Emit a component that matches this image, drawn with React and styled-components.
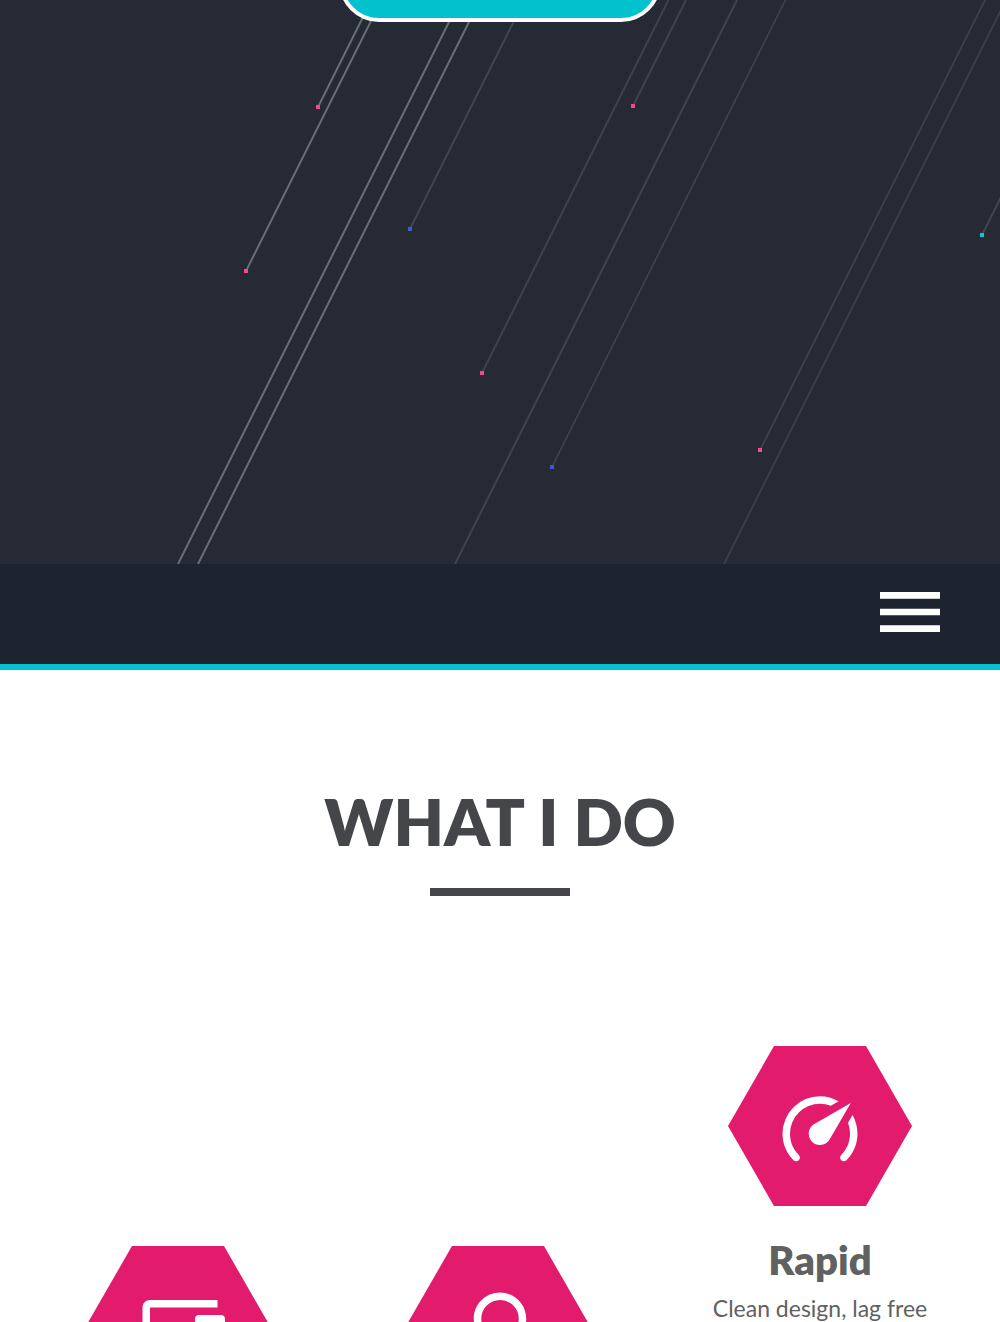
import React from 'react';
import styled, { createGlobalStyle } from 'styled-components';

const GlobalStyle = createGlobalStyle`
  * { box-sizing: border-box; }
  body {
    margin: 0;
    background: #fff;
    font-family: Lato, "Open Sans", sans-serif;
  }
`;

const Page = styled.div`
  height: 100vh;
  overflow: hidden;
`;

const Hero = styled.header`
  position: relative;
  height: 564px;
  overflow: hidden;
  display: flex;
  justify-content: center;
  align-items: flex-start;
  background: #262a35;
`;

const Streaks = styled.svg`
  position: absolute;
  top: 0;
  left: 50%;
  width: 1000px;
  height: 564px;
  transform: translateX(-50%);
`;

const HeroButton = styled.button`
  position: relative;
  width: 322px;
  height: 80px;
  margin-top: -58px;
  border: 4px solid #fff;
  border-radius: 40px;
  background: #04c2cd;
  cursor: pointer;
`;

const NavBar = styled.nav`
  display: flex;
  justify-content: flex-end;
  padding: 8px 50px 12px;
  background: #1d242f;
  border-bottom: 6px solid #04c2cd;
`;

const MenuButton = styled.button`
  display: block;
  width: 80px;
  height: 80px;
  padding: 0;
  border: 0;
  background: none;
  color: #fff;
  cursor: pointer;
`;

const Icon = styled.svg`
  display: block;
  width: ${(p) => p.$size}px;
  height: ${(p) => p.$size}px;
  fill: currentColor;
`;

const Section = styled.main`
  display: flex;
  flex-direction: column;
  align-items: center;
  padding: 112px 20px 0;
`;

const Heading = styled.h1`
  margin: 0;
  font-size: 65px;
  line-height: 78px;
  font-weight: 800;
  color: #444649;
`;

const Rule = styled.div`
  width: 140px;
  height: 8px;
  margin: 28px 0 150px;
  background: #444649;
`;

const Services = styled.div`
  align-self: stretch;
  display: grid;
  grid-template-columns: repeat(3, 1fr);
`;

const Service = styled.article`
  display: flex;
  flex-direction: column;
  align-items: center;
  text-align: center;
  color: #616161;
  transform: ${(p) => (p.$pending ? 'translateY(200px)' : 'none')};
`;

const Hexagon = styled.div`
  display: flex;
  justify-content: center;
  width: 188px;
  height: 160px;
  padding-top: 39px;
  background: #e31b6d;
  color: #fff;
  clip-path: ${(p) =>
    p.$pending
      ? 'polygon(46px 0, 138px 0, 184px 50%, 138px 100%, 46px 100%, 0 50%)'
      : 'polygon(48px 0, 140px 0, 186px 50%, 140px 100%, 48px 100%, 2px 50%)'};
`;

const ServiceTitle = styled.h2`
  margin: 29px 0 0;
  font-size: 40px;
  line-height: 50px;
  font-weight: 800;
`;

const ServiceText = styled.p`
  margin: 9px 0 0;
  font-size: 23px;
  line-height: 28px;
  font-weight: 400;
`;

const paths = {
  menu: 'M3 18h18v-2H3v2zm0-5h18v-2H3v2zm0-7v2h18V6H3z',
  devices:
    'M4 6h18V4H4c-1.1 0-2 .9-2 2v11H0v3h14v-3H4V6zm19 2h-6c-.55 0-1 .45-1 1v10c0 .55.45 1 1 1h6c.55 0 1-.45 1-1V9c0-.55-.45-1-1-1zm-1 9h-4v-7h4v7z',
  bulb:
    'M9 21c0 .55.45 1 1 1h4c.55 0 1-.45 1-1v-1H9v1zm3-19C8.14 2 5 5.14 5 9c0 2.38 1.19 4.47 3 5.74V17c0 .55.45 1 1 1h6c.55 0 1-.45 1-1v-2.26c1.81-1.27 3-3.36 3-5.74 0-3.86-3.14-7-7-7zm2.85 11.1l-.85.6V16h-4v-2.3l-.85-.6C7.8 12.16 7 10.63 7 9c0-2.76 2.24-5 5-5s5 2.24 5 5c0 1.63-.8 3.16-2.15 4.1z',
  speed:
    'M12,16A3,3 0 0,1 9,13C9,11.88 9.61,10.9 10.5,10.39L20.21,4.77L14.68,14.35C14.18,15.33 13.17,16 12,16M12,3C13.81,3 15.5,3.5 16.97,4.32L14.87,5.53C14,5.19 13,5 12,5A8,8 0 0,0 4,13C4,15.21 4.89,17.21 6.34,18.65H6.35C6.74,19.04 6.74,19.67 6.35,20.06C5.96,20.45 5.32,20.45 4.93,20.07V20.07C3.12,18.26 2,15.76 2,13A10,10 0 0,1 12,3M22,13C22,15.76 20.88,18.26 19.07,20.07V20.07C18.68,20.45 18.05,20.45 17.66,20.06C17.27,19.67 17.27,19.04 17.66,18.65V18.65C19.11,17.2 20,15.21 20,13C20,12 19.81,11 19.46,10.1L20.67,8C21.5,9.5 22,11.18 22,13Z',
};

const Glyph = ({ name, size }) => (
  <Icon $size={size} viewBox="0 0 24 24" aria-hidden="true">
    <path d={paths[name]} />
  </Icon>
);

// Every streak falls two pixels for each pixel it moves left; (x, y) is its lower end.
const streaks = [
  { x: 318, y: 107, stroke: '#6b6d76', head: '#ff4588' },
  { x: 246, y: 271, stroke: '#6b6d76', head: '#ff4588' },
  { x: 178, y: 564, stroke: '#6b6d76' },
  { x: 198, y: 564, stroke: '#6b6d76' },
  { x: 410, y: 229, stroke: '#42454f', head: '#3c5cc8' },
  { x: 482, y: 373, stroke: '#40434d', head: '#ff4588' },
  { x: 633, y: 106, stroke: '#40434d', head: '#ff4588' },
  { x: 455, y: 564, stroke: '#40434d' },
  { x: 552, y: 467, stroke: '#3c3f4a', head: '#4254cf' },
  { x: 760, y: 450, stroke: '#3c3f4a', head: '#ff4588' },
  { x: 724, y: 564, stroke: '#3c3f4a' },
  { x: 982, y: 235, stroke: '#42444f', head: '#14c6d2' },
];

const services = [
  { icon: 'devices', pending: true },
  { icon: 'bulb', pending: true },
  { icon: 'speed', title: 'Rapid', text: 'Clean design, lag free' },
];

export default function App() {
  return (
    <Page>
      <GlobalStyle />
      <Hero>
        <Streaks viewBox="0 0 1000 564" aria-hidden="true">
          {streaks.map((s) => (
            <g key={`${s.x}-${s.y}`}>
              <line x1={s.x} y1={s.y} x2={s.x + s.y / 2} y2="0" stroke={s.stroke} strokeWidth="2" />
              {s.head && <rect x={s.x - 2} y={s.y - 2} width="4" height="4" fill={s.head} />}
            </g>
          ))}
        </Streaks>
        <HeroButton type="button" aria-label="View my work" />
      </Hero>
      <NavBar>
        <MenuButton type="button" aria-label="Menu">
          <Glyph name="menu" size={80} />
        </MenuButton>
      </NavBar>
      <Section>
        <Heading>WHAT I DO</Heading>
        <Rule />
        <Services>
          {services.map((s) => (
            <Service key={s.icon} $pending={s.pending}>
              <Hexagon $pending={s.pending}>
                <Glyph name={s.icon} size={90} />
              </Hexagon>
              {s.title && <ServiceTitle>{s.title}</ServiceTitle>}
              {s.text && <ServiceText>{s.text}</ServiceText>}
            </Service>
          ))}
        </Services>
      </Section>
    </Page>
  );
}
